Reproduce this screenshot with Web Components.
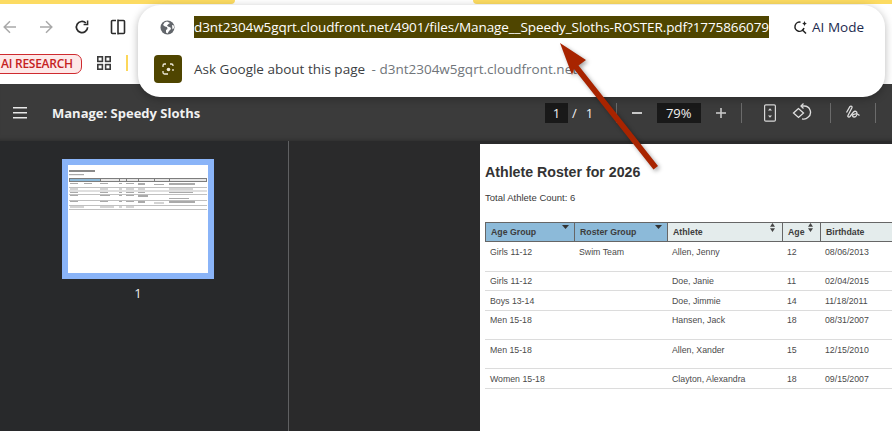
<!DOCTYPE html>
<html>
<head>
<meta charset="utf-8">
<title>Manage: Speedy Sloths</title>
<style>
  html, body { margin: 0; padding: 0; background: #2a2a2b; }
  body { width: 892px; height: 431px; overflow: hidden; position: relative; font-family: "Open Sans", "Noto Sans", sans-serif; }
</style>
</head>
<body>
  <browser-bar></browser-bar>
  <pdf-toolbar title-text="Manage: Speedy Sloths"></pdf-toolbar>
  <pdf-viewer>
    <thumb-pane slot="side"></thumb-pane>
    <roster-page slot="main">
      <roster-row head h="20">
        <roster-cell sort="down" active>Age Group</roster-cell>
        <roster-cell sort="down" active>Roster Group</roster-cell>
        <roster-cell sort="both">Athlete</roster-cell>
        <roster-cell sort="both">Age</roster-cell>
        <roster-cell>Birthdate</roster-cell>
      </roster-row>
      <roster-row h="30" pad="5"><roster-cell>Girls 11-12</roster-cell><roster-cell>Swim Team</roster-cell><roster-cell>Allen, Jenny</roster-cell><roster-cell>12</roster-cell><roster-cell>08/06/2013</roster-cell></roster-row>
      <roster-row h="19" pad="4"><roster-cell>Girls 11-12</roster-cell><roster-cell></roster-cell><roster-cell>Doe, Janie</roster-cell><roster-cell>11</roster-cell><roster-cell>02/04/2015</roster-cell></roster-row>
      <roster-row h="20" pad="5"><roster-cell>Boys 13-14</roster-cell><roster-cell></roster-cell><roster-cell>Doe, Jimmie</roster-cell><roster-cell>14</roster-cell><roster-cell>11/18/2011</roster-cell></roster-row>
      <roster-row h="29" pad="4"><roster-cell>Men 15-18</roster-cell><roster-cell></roster-cell><roster-cell>Hansen, Jack</roster-cell><roster-cell>18</roster-cell><roster-cell>08/31/2007</roster-cell></roster-row>
      <roster-row h="29" pad="5"><roster-cell>Men 15-18</roster-cell><roster-cell></roster-cell><roster-cell>Allen, Xander</roster-cell><roster-cell>15</roster-cell><roster-cell>12/15/2010</roster-cell></roster-row>
      <roster-row h="20" pad="5"><roster-cell>Women 15-18</roster-cell><roster-cell></roster-cell><roster-cell>Clayton, Alexandra</roster-cell><roster-cell>18</roster-cell><roster-cell>09/15/2007</roster-cell></roster-row>
    </roster-page>
  </pdf-viewer>
  <omni-popup></omni-popup>
  <red-arrow></red-arrow>

<script>
class BrowserBar extends HTMLElement {
  connectedCallback() {
    this.attachShadow({ mode: "open" });
    this.shadowRoot.innerHTML = `
      <style>
        :host { display: block; height: 84px; background: #fff; overflow: hidden; }
        #tabs { display: flex; justify-content: space-between; height: 4px; }
        #tabs i { display: block; height: 4px; background: #fcdb62; }
        #tabs i:first-child { width: 235px; border-radius: 0 0 8px 0; }
        #tabs i:last-child { width: 419px; border-radius: 0 0 0 8px; }
        #nav { display: flex; align-items: center; height: 46px; }
        #nav svg { display: block; flex: none; }
        #marks { display: flex; align-items: center; height: 26px; }
        #pill {
          box-sizing: border-box; height: 20px; width: 90px; margin: 1px 0 0 -8px; padding-left: 8px;
          border: 1px solid #cf2a2f; border-radius: 7px; background: #fde8e8; color: #c5221f;
          font: 600 12px/18px "Open Sans", sans-serif; white-space: nowrap; letter-spacing: -.25px;
        }
        #bar { width: 2px; height: 16px; background: #fcd75a; margin-left: 15px; }
        #apps { margin-left: 15px; display: block; }
      </style>
      <div id="tabs"><i></i><i></i></div>
      <div id="nav">
        <svg style="margin-left:2px" width="16" height="16" viewBox="0 0 16 16" fill="none" stroke="#a9a9a9" stroke-width="1.5"><path d="M14 8H2.500M8 2.200 2.200 8 8 13.800"/></svg>
        <svg style="margin-left:20px" width="16" height="16" viewBox="0 0 16 16" fill="none" stroke="#a9a9a9" stroke-width="1.5"><path d="M2 8h11.500M8 2.200 13.800 8 8 13.800"/></svg>
        <svg style="margin-left:20px" width="16" height="16" viewBox="0 0 16 16" fill="none" stroke="#2b2b2b" stroke-width="1.7"><path d="M13.600 8.200A5.600 5.600 0 1 1 11.900 4"/><path d="M13.600 1.600v4h-4" stroke-width="1.5"/></svg>
        <svg style="margin-left:20px" width="16" height="16" viewBox="0 0 16 16" fill="none" stroke="#2b2b2b" stroke-width="1.6"><path d="M6 1.500H2.500A1 1 0 0 0 1.500 2.500v11a1 1 0 0 0 1 1H6M8 .5v15M8 1.500h5.500a1 1 0 0 1 1 1v11a1 1 0 0 1-1 1H8"/></svg>
      </div>
      <div id="marks">
        <div id="pill">AI RESEARCH</div>
        <svg id="apps" width="14" height="14" viewBox="0 0 14 14" fill="none" stroke="#3a3a3a" stroke-width="1.6"><rect x=".8" y=".8" width="4.600" height="4.600"/><rect x="8.600" y=".8" width="4.600" height="4.600"/><rect x=".8" y="8.600" width="4.600" height="4.600"/><rect x="8.600" y="8.600" width="4.600" height="4.600"/></svg>
        <div id="bar"></div>
      </div>
    `;
  }
}
customElements.define("browser-bar", BrowserBar);

class OmniPopup extends HTMLElement {
  connectedCallback() {
    this.attachShadow({ mode: "open" });
    this.shadowRoot.innerHTML = `
      <style>
        :host {
          display: block; position: absolute; left: 138px; top: 5px; width: 747px; height: 92px;
          background: #fff; border-radius: 22px; box-shadow: 0 2px 8px rgba(0,0,0,.28);
          font-family: "Open Sans", sans-serif;
        }
        #top { display: flex; align-items: center; height: 44px; }
        #globe { margin-left: 22px; flex: none; display: block; }
        #url {
          margin-left: 19px; height: 22px; background: #4f4500; color: #fff; flex: none;
          font-size: 13.500px; line-height: 22px; white-space: nowrap; letter-spacing: -.09px;
        }
        #mode { margin-left: auto; margin-right: 21px; display: flex; align-items: center; gap: 4px; color: #1d2b4f; font-size: 13.500px; font-weight: 500; white-space: nowrap; flex: none; }
        #mode svg { display: block; }
        #ask { display: flex; align-items: center; height: 28px; margin-top: 6px; }
        #lens { margin-left: 16px; width: 28px; height: 28px; border-radius: 4px; background: #4f4500; display: flex; align-items: center; justify-content: center; flex: none; }
        #ask span { margin-left: 12px; color: #3c4043; font-size: 13.500px; white-space: nowrap; }
        #ask em { font-style: normal; color: #70757a; margin-left: 3px; }
      </style>
      <div id="top">
        <svg id="globe" width="15" height="15" viewBox="0 0 15 15"><circle cx="7.500" cy="7.500" r="7" fill="#62666b"/><path d="M7 1.500 4.500 2.500 3 5l2 1.500L7 7l.5 2-1.500 1v2.500L7.500 13.500 9 11l2-2-.5-1.500L8 6.500 7 5.500 8.500 4 10 3z" fill="#fff"/><path d="M12 5l1.800.5.2 2.500-1.500 1.500z" fill="#fff"/></svg>
        <div id="url">d3nt2304w5gqrt.cloudfront.net/4901/files/Manage__Speedy_Sloths-ROSTER.pdf?1775866079</div>
        <div id="mode">
          <svg width="15" height="15" viewBox="0 0 15 15" fill="none" stroke="#222" stroke-width="1.500"><path d="M7.500 2.200A4.600 4.600 0 1 0 11 8M9 9.500l4 4"/><path d="M11.500 .8c.3 1.700 .9 2.400 2.700 2.800-1.800 .4-2.400 1.100-2.700 2.800-.3-1.700-.9-2.400-2.700-2.800 1.800-.4 2.400-1.100 2.700-2.800z" fill="#222" stroke="none"/></svg>
          AI Mode
        </div>
      </div>
      <div id="ask">
        <div id="lens">
          <svg width="14" height="14" viewBox="0 0 14 14" fill="none" stroke="#efeadb" stroke-width="1.300"><path d="M2 5V3.500A1.500 1.500 0 0 1 3.500 2H5M9 2h1.500A1.500 1.500 0 0 1 12 3.500V4M2 9v1.500A1.500 1.500 0 0 0 3.500 12H7"/><circle cx="7.500" cy="7.500" r="1.800" fill="#efeadb" stroke="none"/><path d="M12 7v2"/></svg>
        </div>
        <span>Ask Google about this page <em>- d3nt2304w5gqrt.cloudfront.net</em></span>
      </div>
    `;
  }
}
customElements.define("omni-popup", OmniPopup);

class PdfToolbar extends HTMLElement {
  connectedCallback() {
    const title = this.getAttribute("title-text");
    this.attachShadow({ mode: "open" });
    this.shadowRoot.innerHTML = `
      <style>
        :host {
          display: flex; align-items: center; height: 57px; box-sizing: border-box;
          background: #3b3b3b; color: #f1f1f1; font-family: "Open Sans", sans-serif;
          box-shadow: inset 0 -5px 4px -4px rgba(0,0,0,.25);
        }
        svg { display: block; flex: none; }
        #title { margin-left: 24px; font-size: 13px; font-weight: 700; white-space: nowrap; width: 493px; flex: none; }
        .box { background: #191919; height: 20px; line-height: 20px; font-size: 13px; text-align: center; flex: none; }
        .txt { font-size: 13px; flex: none; }
        .sep { width: 1px; height: 20px; background: #6b6b6b; flex: none; }
      </style>
      <svg style="margin-left:13px" width="15" height="12" viewBox="0 0 15 12" fill="#e8e8e8"><rect y="0" width="14" height="1.500"/><rect y="5" width="14" height="1.500"/><rect y="10" width="14" height="1.500"/></svg>
      <div id="title">${title}</div>
      <div class="box" style="width:23px">1</div>
      <div class="txt" style="margin-left:4px">/</div>
      <div class="txt" style="margin-left:9px">1</div>
      <div class="sep" style="margin-left:23px"></div>
      <svg style="margin-left:13.500px" width="12" height="12" viewBox="0 0 12 12" fill="#c8c8c8"><rect x="1" y="5" width="10" height="2"/></svg>
      <div class="box" style="width:44px;margin-left:14px">79%</div>
      <svg style="margin-left:14px" width="12" height="12" viewBox="0 0 12 12" fill="#c8c8c8"><rect x="1" y="5.200" width="10" height="1.600"/><rect x="5.200" y="1" width="1.600" height="10"/></svg>
      <div class="sep" style="margin-left:14px"></div>
      <svg style="margin-left:21px" width="14" height="18" viewBox="0 0 14 18" fill="none" stroke="#d8d8d8" stroke-width="1.200"><rect x="1.600" y=".8" width="10.800" height="16.400" rx="1.200"/><path d="M7 4.200 5 6.500h4zM7 13.800 5 11.500h4z" fill="#d8d8d8" stroke="none"/></svg>
      <svg style="margin-left:15px" width="20" height="19" viewBox="0 0 20 19" fill="none" stroke="#e0e0e0" stroke-width="1.300"><path d="M6.500 5.500 1.500 10l5 4.500 5-4.500z"/><path d="M9 3h3a6.300 6.300 0 0 1 4 11.300 6 6 0 0 1-6 1.500"/><path d="M11.500 .5 9 3l2.500 2.500"/></svg>
      <div class="sep" style="margin-left:18px"></div>
      <svg style="margin-left:14px" width="16" height="16" viewBox="0 0 16 16" fill="none" stroke="#e0e0e0" stroke-width="1.300"><path d="M1.500 7.500 5 1.500c1-1 2.500 0 1.800 1.500L3 10.500c-.6 1.500 1 2 2 1l3.500-4.500c1.500-1.500 3.500-.5 3.500 1.500s-1.500 3.500-3 3.500c-1.500 0-2-1.500-.5-2.500 1.800-1 4.500-.5 6 1"/></svg>
      <div class="sep" style="margin-left:14px"></div>
    `;
  }
}
customElements.define("pdf-toolbar", PdfToolbar);

class PdfViewer extends HTMLElement {
  connectedCallback() {
    this.attachShadow({ mode: "open" });
    this.shadowRoot.innerHTML = `
      <style>
        :host { display: grid; grid-template-columns: 288px 1px 1fr; height: 290px; background: #2a2a2b; }
        #rule { background: #5f6062; }
        #main { padding: 3px 0 0 191px; overflow: hidden; min-width: 0; }
      </style>
      <slot name="side"></slot>
      <div id="rule"></div>
      <div id="main"><slot name="main"></slot></div>
    `;
  }
}
customElements.define("pdf-viewer", PdfViewer);

class ThumbPane extends HTMLElement {
  connectedCallback() {
    this.attachShadow({ mode: "open" });
    // tiny table on the preview: too small to read, so just grey bars
    const bars = [
      [0,0,26,2,"#8a8a8a"],[0,4,15,1.200,"#aaa"],
      [0,8,138,4,"#7d7d7d"],[1,9,15,2,"#8cb9d8"],[16,9,15,2,"#8cb9d8"],[32,9,18,2,"#e6e6e6"],[51,9,6,2,"#e6e6e6"],[58,9,11,2,"#e6e6e6"],[70,9,15,2,"#e6e6e6"],[86,9,14,2,"#e6e6e6"],[101,9,36,2,"#e6e6e6"],
      [1,13,8,1,"#aaa"],[15,13,8,1,"#aaa"],[31,13,8,1,"#aaa"],[50,13,3,1,"#aaa"],[57,13,8,1,"#aaa"],[69,13,7,2,"#aaa"],[85,14,10,1,"#aaa"],[100,13,26,2,"#aaa"],
      [0,17,138,1,"#c0c0c0"],[1,18.500,8,1,"#aaa"],[31,18.500,8,1,"#aaa"],[50,18.500,3,1,"#aaa"],[57,18.500,8,1,"#aaa"],[69,18.500,7,1,"#aaa"],[100,18.500,24,1,"#aaa"],
      [0,20.500,138,1,"#c0c0c0"],[1,22,8,1,"#aaa"],[31,22,8,1,"#aaa"],[50,22,3,1,"#aaa"],[57,22,8,1,"#aaa"],[69,22,7,1,"#aaa"],[100,22,24,1,"#aaa"],
      [0,24,138,1,"#c0c0c0"],[1,25,8,1,"#aaa"],[31,25,10,1,"#aaa"],[50,25,3,1,"#aaa"],[57,25,8,1,"#aaa"],[69,25,10,2,"#aaa"],[100,28,20,1,"#aaa"],
      [0,30,138,1,"#c0c0c0"],[1,31,8,1,"#aaa"],[31,31,8,1,"#aaa"],[50,31,3,1,"#aaa"],[57,31,8,1,"#aaa"],[69,31,7,2,"#aaa"],[85,32.500,10,1,"#aaa"],[100,31,26,2,"#aaa"],
      [0,35,138,1,"#c0c0c0"],[1,36.500,14,1,"#aaa"],[31,36.500,14,1,"#aaa"],[50,36.500,3,1,"#aaa"],[57,36.500,8,1,"#aaa"],[0,39,138,1,"#c0c0c0"]
    ].map(b => `<rect x="${b[0]}" y="${b[1]}" width="${b[2]}" height="${b[3]}" fill="${b[4]}"/>`).join("");
    this.shadowRoot.innerHTML = `
      <style>
        :host { display: flex; flex-direction: column; align-items: center; background: #28292b; padding: 18px 12px 0 0; box-sizing: border-box; height: 290px; width: 288px; }
        #frame { width: 140px; height: 108px; background: #fff; border: 6px solid #8ab4f8; flex: none; overflow: hidden; }
        #frame svg { display: block; filter: blur(.35px); }
        #num { margin-top: 7px; color: #f0f0f0; font: 13px/14px "Open Sans", sans-serif; }
      </style>
      <div id="frame"><svg width="140" height="108" viewBox="-1 -5 140 108">${bars}</svg></div>
      <div id="num">1</div>
    `;
  }
}
customElements.define("thumb-pane", ThumbPane);

class RosterPage extends HTMLElement {
  connectedCallback() {
    this.attachShadow({ mode: "open" });
    this.shadowRoot.innerHTML = `
      <style>
        :host {
          display: block; background: #fff; height: 287px; width: 500px; padding: 0 0 0 5px; box-sizing: border-box;
          font-family: "Liberation Sans", Arial, sans-serif; color: #333; overflow: hidden;
          --cols: 89px 93px 115px 38px 90px;
        }
        h1 { margin: 0; padding-top: 19px; font-size: 14.200px; line-height: 18px; font-weight: bold; color: #333; }
        p { margin: 0; padding-top: 12px; font-size: 9.500px; line-height: 10px; height: 29px; color: #3a3a3a; }
      </style>
      <h1>Athlete Roster for 2026</h1>
      <p>Total Athlete Count: 6</p>
      <slot></slot>
    `;
  }
}
customElements.define("roster-page", RosterPage);

class RosterRow extends HTMLElement {
  connectedCallback() {
    const h = this.getAttribute("h");
    const pad = this.getAttribute("pad") || 5;
    const head = this.hasAttribute("head");
    this.attachShadow({ mode: "open" });
    this.shadowRoot.innerHTML = `
      <style>
        :host {
          display: grid; grid-template-columns: var(--cols); box-sizing: border-box; height: ${h}px; --pad: ${pad}px;
          ${head ? "border-top: 1px solid #666; border-bottom: 1px solid #666;" : "border-bottom: 1px solid #dcdcdc;"}
        }
      </style>
      <slot></slot>
    `;
  }
}
customElements.define("roster-row", RosterRow);

class RosterCell extends HTMLElement {
  connectedCallback() {
    const head = this.parentElement.hasAttribute("head");
    const active = this.hasAttribute("active");
    const sort = this.getAttribute("sort");
    let mark = "";
    if (sort === "down") mark = `<svg id="mark" style="top:2px;right:5px" width="7" height="4" viewBox="0 0 7 4"><path d="M0 0h7L3.500 4z" fill="#333"/></svg>`;
    if (sort === "both") mark = `<svg id="mark" style="top:0;right:7px" width="5" height="9" viewBox="0 0 5 9"><path d="M2.500 0 5 3.800H0zM0 5.200h5L2.500 9z" fill="#444"/></svg>`;
    this.attachShadow({ mode: "open" });
    this.shadowRoot.innerHTML = `
      <style>
        :host {
          display: block; position: relative; box-sizing: border-box; font-size: 8.750px; white-space: nowrap; color: #4a4a4a;
          padding: ${head ? "4px 0 0 5px" : "var(--pad) 0 0 5px"}; line-height: 10px;
          ${head ? `font-weight: bold; color: #3d3d3d; background: ${active ? "#8cbad9" : "#e4ecec"}; border-left: 1px solid #666;` : ""}
        }
        #mark { position: absolute; display: block; }
      </style>
      <slot></slot>${mark}
    `;
  }
}
customElements.define("roster-cell", RosterCell);

class RedArrow extends HTMLElement {
  connectedCallback() {
    this.attachShadow({ mode: "open" });
    this.shadowRoot.innerHTML = `
      <style>
        :host { display: block; position: absolute; left: 0; top: 0; width: 892px; height: 431px; pointer-events: none; }
        svg { display: block; filter: drop-shadow(2px 2px 2px rgba(0,0,0,.35)); }
      </style>
      <svg width="892" height="431" viewBox="0 0 892 431">
        <path d="M560 43 586 60 578.500 65.500 658 166 653.500 169.500 574 69 572 75z" fill="#a82400"/>
      </svg>
    `;
  }
}
customElements.define("red-arrow", RedArrow);
</script>
</body>
</html>
